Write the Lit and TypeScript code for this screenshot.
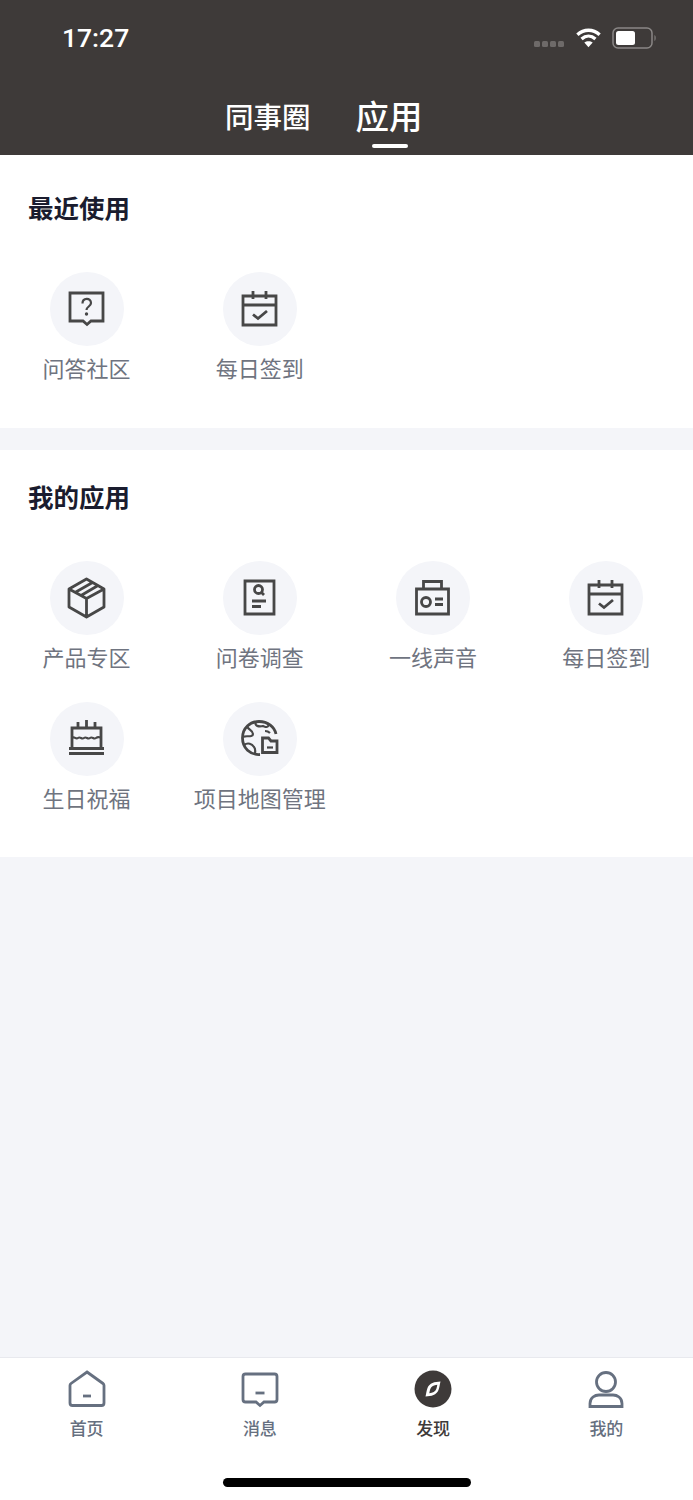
import { LitElement, html, css, svg } from 'lit';
import { customElement } from 'lit/decorators.js';

// app icons, drawn in the coordinates of the 74px circle
const icons: Record<string, unknown> = {
  question: svg`<path d="M20 21h33v28H41l-4 3.500-4-3.500H20z"/><path class="thin" d="M32.500 31.500c0-6 8.500-6 8.500-.5 0 3.500-4.500 3.500-4.500 7"/><circle class="dot" cx="36.500" cy="42" r="1.700"/>`,
  calendar: svg`<path d="M20 24h33v29H20zM20 33h33M30 19v8M43 19v8"/><path d="M30 42.500l5 4 9-7.500"/>`,
  box: svg`<path d="M36.500 18L54 28v18L36.500 56 19 46V28zM19 28l17.500 9.500L54 28M36.500 37.500V56M25 31.500l17.500-10M31 34.500l17-10" stroke-linejoin="round"/>`,
  doc: svg`<path d="M22 20h29v33H22z"/><circle cx="35.500" cy="28.500" r="4"/><path d="M38.500 31.500l2.500 2.500M29 40h14M29 45.500h9"/>`,
  radio: svg`<path d="M20.500 28h32v25h-32zM27.500 28v-7.500h18V28"/><circle cx="30" cy="41" r="4.500"/><path d="M39 38h8M39 43.500h8"/>`,
  cake: svg`<path d="M22 46V26h29v20M19 46.500h35M19 51.500h35M28 20v6M36.500 18v8M45 20v6"/><path class="thin" d="M22 36c2.500-2.500 3.500 2 6 0s3.500 2 6 0 3.500 2 6 0 3.500 2 6 0 3-.500 5-.500"/>`,
  globe: svg`<path d="M37 52.500C27 53 19.500 46 19.500 36S27 19.500 36 19.500 51.500 25 53 32"/><path class="thin" d="M24 24c1 4 6 4 6 8s-8 1-10 3M33 20c-2 4 3 5 7 4 3 1 4 2 6-1M21 43c4-3 8-1 10 2 2 2 1 5 1 7M42 29c3 0 4 1 5 2"/><path d="M39.500 36h6l2.500 3h6v11.500H39.500z"/><path class="thin" d="M44 45.500h6"/>`,
};

const tabIcons: Record<string, unknown> = {
  home: svg`<path d="M19 2l16 11.500a2.500 2.500 0 0 1 1 2V33a2.500 2.500 0 0 1-2.500 2.500h-29A2.500 2.500 0 0 1 2 33V15.500a2.500 2.500 0 0 1 1-2z"/><path d="M15 26h8"/>`,
  message: svg`<path d="M4.500 4h29a2.500 2.500 0 0 1 2.500 2.500v23a2.500 2.500 0 0 1-2.500 2.500H23l-4 3.500-4-3.500H4.500A2.500 2.500 0 0 1 2 29.500v-23A2.500 2.500 0 0 1 4.500 4z"/><path d="M14.500 23h9"/>`,
  user: svg`<circle cx="19" cy="12" r="9.500"/><path d="M3 36.500v-3c0-6 5-8.500 9-8.500h14c4 0 9 2.500 9 8.500v3z"/>`,
};

const recent = [
  { icon: 'question', label: '问答社区' },
  { icon: 'calendar', label: '每日签到' },
];

const mine = [
  { icon: 'box', label: '产品专区' },
  { icon: 'doc', label: '问卷调查' },
  { icon: 'radio', label: '一线声音' },
  { icon: 'calendar', label: '每日签到' },
  { icon: 'cake', label: '生日祝福' },
  { icon: 'globe', label: '项目地图管理' },
];

@customElement('app-root')
export class AppRoot extends LitElement {
  static styles = css`
    :host {
      display: block;
      font-family: 'Noto Sans CJK SC', 'Noto Sans', sans-serif;
    }
    .page {
      display: flex;
      flex-direction: column;
      height: 1500px;
      background: #f4f5f9;
      overflow: hidden;
    }
    .header {
      height: 155px;
      flex: none;
      background: #3e3a39;
      color: #fff;
    }
    .status {
      display: flex;
      align-items: center;
      height: 76px;
      padding: 0 36px 0 62px;
    }
    .time {
      font: 500 26.500px/78px Roboto, sans-serif;
      flex: 1;
    }
    .dots {
      display: flex;
      gap: 2px;
      margin-right: 12px;
      margin-top: 12px;
    }
    .dots i {
      width: 6px;
      height: 6px;
      border-radius: 1.500px;
      background: #6e6a69;
    }
    .wifi {
      display: block;
      margin-right: 11px;
      margin-top: -2px;
    }
    .battery {
      display: block;
    }
    .tabs {
      display: flex;
      align-items: center;
      height: 79px;
      padding-left: 225px;
      gap: 45px;
    }
    .tab {
      font-size: 28.500px;
      line-height: 40px;
      font-weight: 500;
      margin-top: 1px;
    }
    .tab.on {
      font-size: 33.500px;
      position: relative;
      margin-top: -2px;
    }
    .tab.on::after {
      content: '';
      position: absolute;
      left: 16px;
      bottom: -13px;
      width: 36px;
      height: 4px;
      border-radius: 2px;
      background: #fff;
    }
    .section {
      background: #fff;
      padding-bottom: 28px;
    }
    .section.first {
      padding-bottom: 29px;
    }
    .section + .section {
      margin-top: 22px;
    }
    .title {
      font-size: 25.500px;
      line-height: 36px;
      font-weight: 700;
      color: #1a1c2e;
      padding: 28px 0 0 28px;
      height: 75px;
      box-sizing: border-box;
      margin: 0 0 36px;
    }
    .first .title {
      padding-top: 34px;
      height: 81px;
    }
    .grid {
      display: grid;
      grid-template-columns: repeat(4, 1fr);
      row-gap: 14px;
    }
    .item {
      display: flex;
      flex-direction: column;
      align-items: center;
      height: 127px;
    }
    .circle {
      width: 74px;
      height: 74px;
      border-radius: 50%;
      background: #f4f5f9;
      flex: none;
    }
    .circle svg {
      display: block;
      fill: none;
      stroke: #474747;
      stroke-width: 2.800;
    }
    .circle svg .thin {
      stroke-width: 2.200;
    }
    .circle svg .dot {
      fill: #474747;
      stroke: none;
    }
    .label {
      font-size: 22px;
      line-height: 32px;
      color: #6f7480;
      margin-top: 5px;
      white-space: nowrap;
    }
    .spacer {
      flex: 1;
    }
    .tabbar {
      height: 143px;
      flex: none;
      box-sizing: border-box;
      background: #fff;
      border-top: 1px solid #e8e9ee;
      position: relative;
      display: grid;
      grid-template-columns: repeat(4, 1fr);
    }
    .nav {
      display: flex;
      flex-direction: column;
      align-items: center;
      padding-top: 12px;
      color: #667080;
    }
    .nav.on {
      color: #3e3a39;
    }
    .nav svg {
      display: block;
      fill: none;
      stroke: #667080;
      stroke-width: 2.800;
    }
    .nav span {
      font-size: 17px;
      line-height: 24px;
      font-weight: 500;
      margin-top: 8px;
    }
    .home-bar {
      position: absolute;
      left: 223px;
      top: 120px;
      width: 248px;
      height: 9px;
      border-radius: 5px;
      background: #000;
    }
  `;

  renderItem(item: { icon: string; label: string }) {
    return html`
      <div class="item">
        <div class="circle">
          <svg width="74" height="74" viewBox="0 0 74 74">${icons[item.icon]}</svg>
        </div>
        <div class="label">${item.label}</div>
      </div>
    `;
  }

  renderNav(icon: string, label: string) {
    return html`
      <div class="nav">
        <svg width="38" height="38" viewBox="0 0 38 38">${tabIcons[icon]}</svg>
        <span>${label}</span>
      </div>
    `;
  }

  render() {
    return html`
      <div class="page">
        <div class="header">
          <div class="status">
            <div class="time">17:27</div>
            <div class="dots"><i></i><i></i><i></i><i></i></div>
            <svg class="wifi" width="25" height="21" viewBox="0 0 27 21" fill="none" stroke="#fff" stroke-width="3.600">
              <path d="M1.500 7.500c7-6.500 17-6.500 24 0M6 12c4.500-4 10.500-4 15 0"/>
              <path d="M13.500 21l-4.500-5c2.500-1.800 6.500-1.800 9 0z" fill="#fff" stroke="none"/>
            </svg>
            <svg class="battery" width="45" height="22" viewBox="0 0 45 22">
              <rect x="1" y="1" width="39" height="20" rx="5" fill="none" stroke="#8a8786" stroke-width="1.500"/>
              <rect x="4" y="4" width="19" height="14" rx="2.500" fill="#fff"/>
              <path d="M42.500 8c1.500.5 1.500 5.500 0 6z" fill="#8a8786"/>
            </svg>
          </div>
          <div class="tabs">
            <div class="tab">同事圈</div>
            <div class="tab on">应用</div>
          </div>
        </div>
        <div class="section first">
          <div class="title">最近使用</div>
          <div class="grid">${recent.map((i) => this.renderItem(i))}</div>
        </div>
        <div class="section">
          <div class="title">我的应用</div>
          <div class="grid">${mine.map((i) => this.renderItem(i))}</div>
        </div>
        <div class="spacer"></div>
        <div class="tabbar">
          ${this.renderNav('home', '首页')}
          ${this.renderNav('message', '消息')}
          <div class="nav on">
            <svg width="38" height="38" viewBox="0 0 38 38">
              <circle cx="19" cy="19" r="18.500" fill="#3e3a39" stroke="none"/>
              <path d="M26.500 11.500c-6 .2-11 1.500-13 6.500-1 2.500-1.200 5.500-2 8.500 6-.2 11-1.500 13-6.500 1-2.500 1.200-5.500 2-8.500z" fill="#fff" stroke="none"/>
              <path d="M23.300 14.700c-3.500.4-6 1.500-7 4.300-.5 1.300-.7 2.800-1 4.300 3.500-.4 6-1.500 7-4.300.5-1.300.7-2.800 1-4.300z" fill="#3e3a39" stroke="none"/>
            </svg>
            <span>发现</span>
          </div>
          ${this.renderNav('user', '我的')}
          <div class="home-bar"></div>
        </div>
      </div>
    `;
  }
}
